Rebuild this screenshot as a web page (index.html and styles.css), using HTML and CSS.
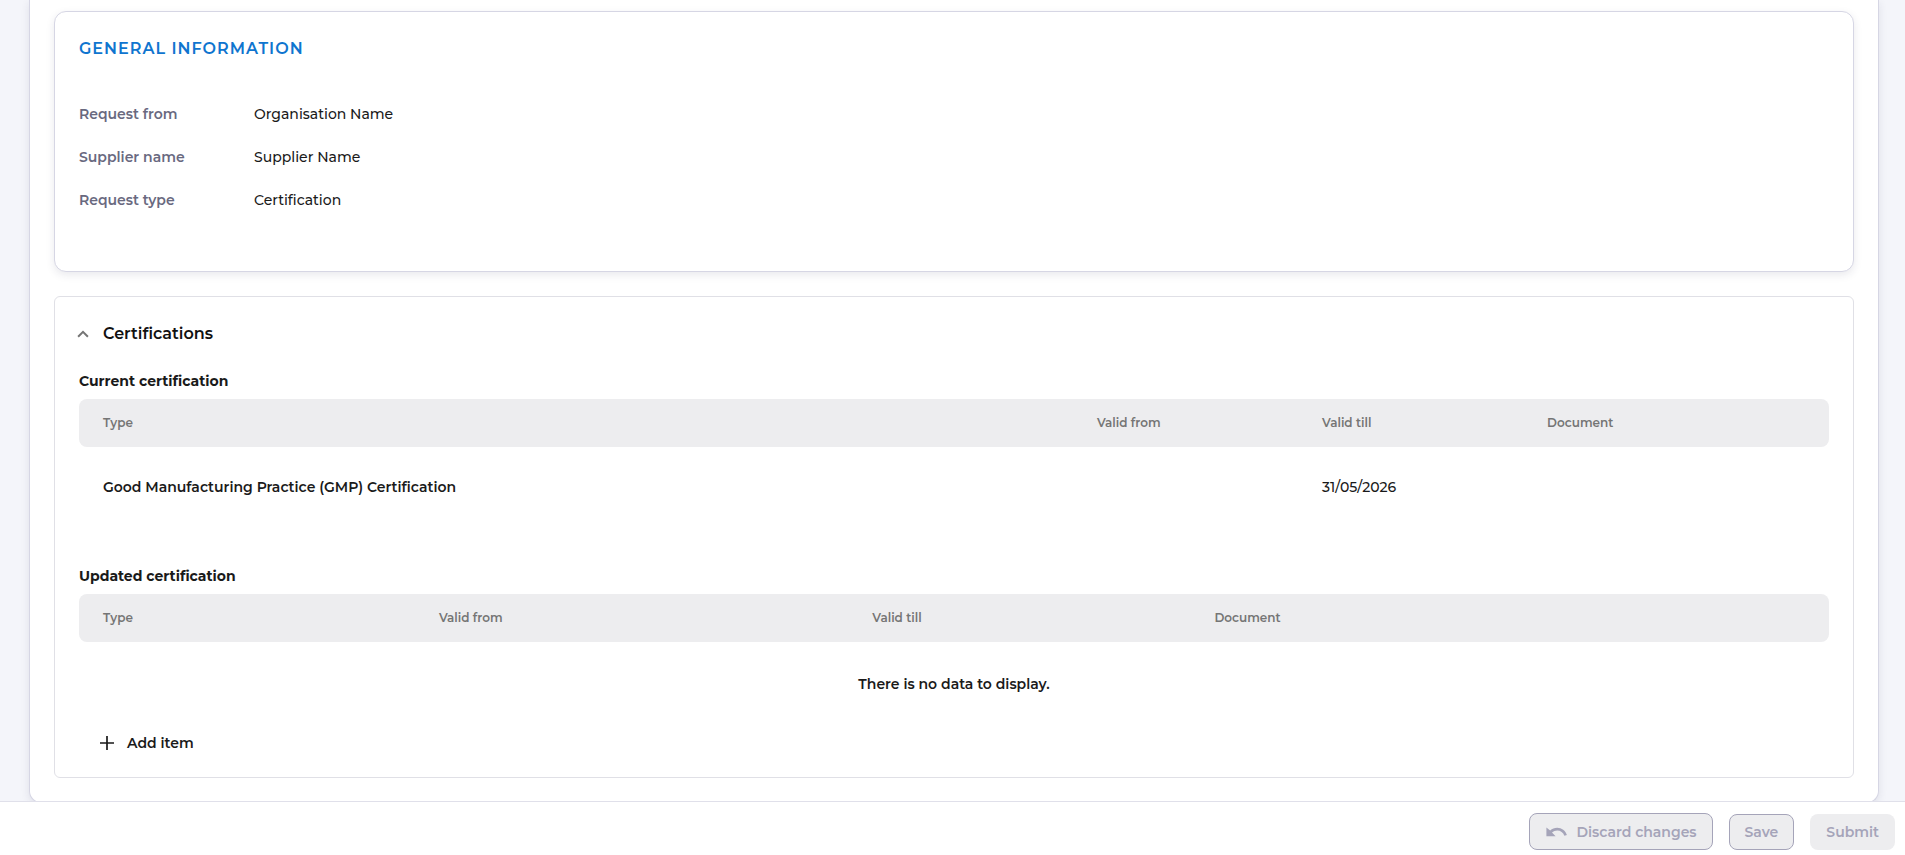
FILE: index.html
```html
<!DOCTYPE html>
<html lang="en">
<head>
<meta charset="utf-8">
<title>Certification request</title>
<link rel="stylesheet" href="styles.css">
</head>
<body>
<main class="page">
  <div class="panel">
    <section class="card info">
      <h2 class="info-title">GENERAL INFORMATION</h2>
      <dl class="info-list">
        <dt>Request from</dt><dd>Organisation Name</dd>
        <dt>Supplier name</dt><dd>Supplier Name</dd>
        <dt>Request type</dt><dd>Certification</dd>
      </dl>
    </section>
    <section class="card certs">
      <h3 class="certs-title">
        <button class="toggle" type="button" aria-expanded="true">
          <svg class="chevron" viewBox="0 0 12 8" aria-hidden="true"><path d="M6 .4.400 6l1.400 1.400L6 3.200l4.200 4.200L11.600 6z"/></svg>
          Certifications
        </button>
      </h3>
      <table class="grid current">
        <caption>Current certification</caption>
        <thead>
          <tr><th class="type">Type</th><th class="from">Valid from</th><th class="till">Valid till</th><th>Document</th></tr>
        </thead>
        <tbody>
          <tr><td class="name">Good Manufacturing Practice (GMP) Certification</td><td></td><td>31/05/2026</td><td></td></tr>
        </tbody>
      </table>
      <table class="grid updated">
        <caption>Updated certification</caption>
        <thead>
          <tr><th class="type">Type</th><th class="from">Valid from</th><th class="till">Valid till</th><th>Document</th></tr>
        </thead>
        <tbody>
          <tr><td class="empty" colspan="4">There is no data to display.</td></tr>
        </tbody>
      </table>
      <button class="add" type="button">
        <svg class="plus" viewBox="0 0 14 14" aria-hidden="true"><path d="M7 0v14M0 7h14"/></svg>
        Add item
      </button>
    </section>
  </div>
</main>
<footer class="actions">
  <button class="btn outlined discard" type="button" disabled>
    <svg class="undo" viewBox="0 0 21 10" aria-hidden="true"><path d="M11.200.8C8.500.8 6.100 1.800 4.200 3.400L.4.600v8.600h9.200L6 5.600C7.400 4.400 9.200 3.600 11.200 3.600c3.300 0 6.100 2 7.200 5.200l2.500-.8C19.500 3.800 15.700.8 11.200.8z"/></svg>
    Discard changes
  </button>
  <button class="btn outlined" type="button" disabled>Save</button>
  <button class="btn" type="button" disabled>Submit</button>
</footer>
</body>
</html>
```
FILE: styles.css
```css
* {
  box-sizing: border-box;
}

body {
  display: flex;
  flex-direction: column;
  height: 100vh;
  margin: 0;
  overflow: hidden;
  background: #f4f5fa;
  color: #1a1a1a;
  font: 500 14px/24px Montserrat, Inter, sans-serif;
}

button {
  margin: 0;
  padding: 0;
  border: 0;
  background: none;
  color: inherit;
  font: inherit;
}

.page {
  flex: 1;
  min-height: 0;
  padding: 0 26px 0 29px;
}

.panel {
  display: flex;
  flex-direction: column;
  gap: 24px;
  padding: 11px 24px 24px;
  border: 1px solid #d6d6e4;
  border-top: 0;
  border-radius: 0 0 12px 12px;
  background: #fff;
  box-shadow: 0 3px 8px rgba(40, 40, 80, 0.1);
}

.card {
  border: 1px solid #e0e0e6;
  border-radius: 6px;
  background: #fff;
}

.info {
  padding: 25px 24px 59px;
  border-color: #d6d6e4;
  border-radius: 12px;
  box-shadow: 0 3px 8px rgba(40, 40, 80, 0.1);
}

.info-title {
  margin: 0 0 41px;
  color: #0f75cf;
  font-size: 16px;
  font-weight: 600;
  line-height: 24px;
  letter-spacing: 1px;
}

.info-list {
  display: grid;
  grid-template-columns: 175px 1fr;
  row-gap: 19px;
  margin: 0;
}

.info-list dt {
  color: #69697f;
  font-weight: 600;
}

.info-list dd {
  margin: 0;
}

.certs {
  padding: 25px 24px 22px;
}

.certs-title {
  margin: 0 0 23px;
  font-size: 16px;
  font-weight: 600;
}

.toggle {
  display: flex;
  align-items: center;
  gap: 14px;
  margin-left: -2px;
  color: #111;
}

.chevron {
  width: 12px;
  height: 8px;
  fill: #757575;
}

.grid {
  width: 100%;
  table-layout: fixed;
  border-collapse: separate;
  border-spacing: 0;
}

.grid caption {
  padding-bottom: 6px;
  font-weight: 700;
  text-align: left;
}

.grid th,
.grid td {
  padding: 0 24px;
  text-align: left;
}

.grid th {
  height: 48px;
  background: #ededef;
  color: #757575;
  font-size: 12px;
  font-weight: 600;
}

.grid th:first-child {
  border-radius: 8px 0 0 8px;
}

.grid th:last-child {
  border-radius: 0 8px 8px 0;
}

.grid td {
  height: 80px;
}

.grid .name,
.grid .empty {
  font-weight: 600;
}

.grid .empty {
  height: 84px;
  text-align: center;
}

.current {
  margin-bottom: 37px;
}

.current .type {
  width: 56.8%;
}

.current .from,
.current .till {
  width: 12.86%;
}

.updated .type {
  width: 19.2%;
}

.updated .from {
  width: 24.76%;
}

.updated .till {
  width: 19.55%;
}

.add {
  display: flex;
  align-items: center;
  gap: 13px;
  margin: 5px 0 0 21px;
  font-weight: 600;
}

.plus {
  width: 14px;
  height: 14px;
  stroke: #1a1a1a;
  stroke-width: 1.7;
}

.actions {
  display: flex;
  align-items: center;
  justify-content: flex-end;
  gap: 16px;
  padding: 11px 10px 5px;
  border-top: 1px solid #e0e0ea;
  background: #fff;
}

.btn {
  display: flex;
  align-items: center;
  height: 36px;
  padding: 0 16px;
  border-radius: 8px;
  background: #ededef;
  color: #a5a4b9;
  font-weight: 600;
}

.outlined {
  padding: 0 15px;
  border: 1px solid #a5a4b9;
}

.discard {
  gap: 10px;
  height: 37px;
  padding-left: 16px;
}

.undo {
  width: 21px;
  height: 10px;
  fill: #a5a4b9;
}
```
